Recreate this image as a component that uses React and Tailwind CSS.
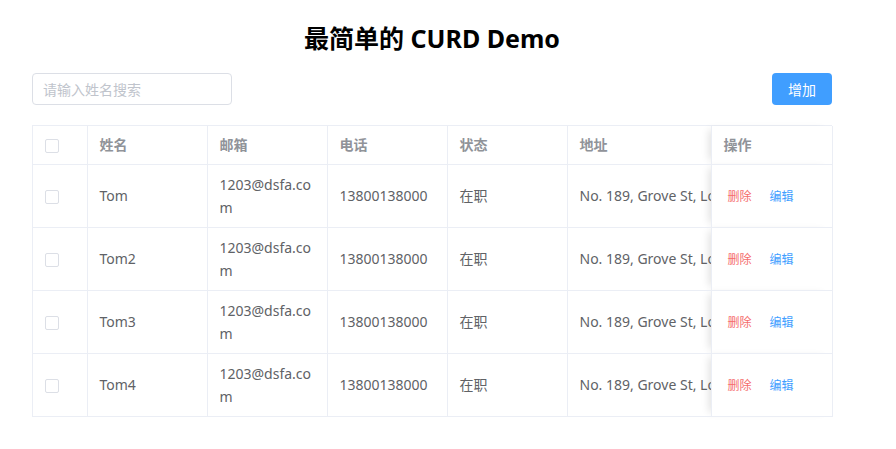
import React, { useState } from "react";

const font = {
  fontFamily: '"Noto Sans", "Noto Sans CJK SC", sans-serif',
};

const initialRows = [
  { id: 1, name: "Tom" },
  { id: 2, name: "Tom2" },
  { id: 3, name: "Tom3" },
  { id: 4, name: "Tom4" },
].map((r) => ({
  ...r,
  email: "1203@dsfa.com",
  phone: "13800138000",
  status: "在职",
  address: "No. 189, Grove St, Los Angeles",
}));

const Checkbox = () => (
  <span className="inline-block w-[14px] h-[14px] border border-[#dcdfe6] rounded-[2px] bg-white align-middle" />
);

const App = () => {
  const [value, setValue] = useState("");
  const [rows] = useState(initialRows);

  const list = rows.filter((r) => !value || r.name.toLowerCase().includes(value.toLowerCase()));

  return (
    <div className="w-[896px] h-[449px] bg-white" style={font}>
      <div className="ml-8 w-[800px] pt-[22px]">
        <h1 className="text-center text-[25px] leading-[32px] font-bold text-black">
          最简单的 CURD Demo
        </h1>
        {/* toolbar */}
        <div className="flex justify-between items-center mt-[19px]">
          <input
            type="text"
            placeholder="请输入姓名搜索"
            value={value}
            onChange={(e) => setValue(e.target.value)}
            className="w-[200px] h-8 px-[10px] text-[14px] text-[#606266] border border-[#dcdfe6] rounded-[4px] outline-none placeholder:text-[#c0c4cc]"
          />
          <button className="w-[60px] h-8 rounded-[4px] bg-[#409eff] text-white text-[14px]">
            增加
          </button>
        </div>
        {/* <!-- Table --> */}
        <div className="mt-5 w-[800px] border-t border-l border-[#ebeef5]">
          <table className="w-[799px] table-fixed border-collapse text-[14px]">
            <colgroup>
              <col className="w-[54px]" />
              <col className="w-[120px]" />
              <col className="w-[120px]" />
              <col className="w-[120px]" />
              <col className="w-[120px]" />
              <col className="w-[144px]" />
              <col className="w-[121px]" />
            </colgroup>
            <thead>
              <tr className="text-left text-[#909399] font-bold">
                <th className="h-[38px] px-3 border-r border-b border-[#ebeef5]">
                  <Checkbox />
                </th>
                <th className="px-3 border-r border-b border-[#ebeef5]">姓名</th>
                <th className="px-3 border-r border-b border-[#ebeef5]">邮箱</th>
                <th className="px-3 border-r border-b border-[#ebeef5]">电话</th>
                <th className="px-3 border-r border-b border-[#ebeef5]">状态</th>
                <th className="px-3 border-r border-b border-[#ebeef5]">地址</th>
                <th className="px-3 border-r border-b border-[#ebeef5] shadow-[-6px_0_8px_-4px_rgba(0,0,0,0.12)]">
                  操作
                </th>
              </tr>
            </thead>
            <tbody className="text-[#606266]">
              {list.map((data) => (
                <tr key={data.id}>
                  <td className="h-[63px] px-3 border-r border-b border-[#ebeef5]">
                    <Checkbox />
                  </td>
                  <td className="px-3 border-r border-b border-[#ebeef5]">{data.name}</td>
                  <td className="px-3 py-2 leading-[23px] break-all border-r border-b border-[#ebeef5]">
                    {data.email}
                  </td>
                  <td className="px-3 border-r border-b border-[#ebeef5]">{data.phone}</td>
                  <td className="px-3 border-r border-b border-[#ebeef5]">{data.status}</td>
                  <td className="pl-3 border-r border-b border-[#ebeef5] whitespace-nowrap overflow-hidden">
                    {data.address}
                  </td>
                  <td className="pl-4 border-r border-b border-[#ebeef5] bg-white shadow-[-6px_0_8px_-4px_rgba(0,0,0,0.12)]">
                    <div className="flex items-center gap-[18px] text-[12px] pt-[3px]">
                      <button className="text-[#f56c6c]">删除</button>
                      <button className="text-[#409eff]">编辑</button>
                    </div>
                  </td>
                </tr>
              ))}
            </tbody>
          </table>
        </div>
      </div>
    </div>
  );
};

export default App;
